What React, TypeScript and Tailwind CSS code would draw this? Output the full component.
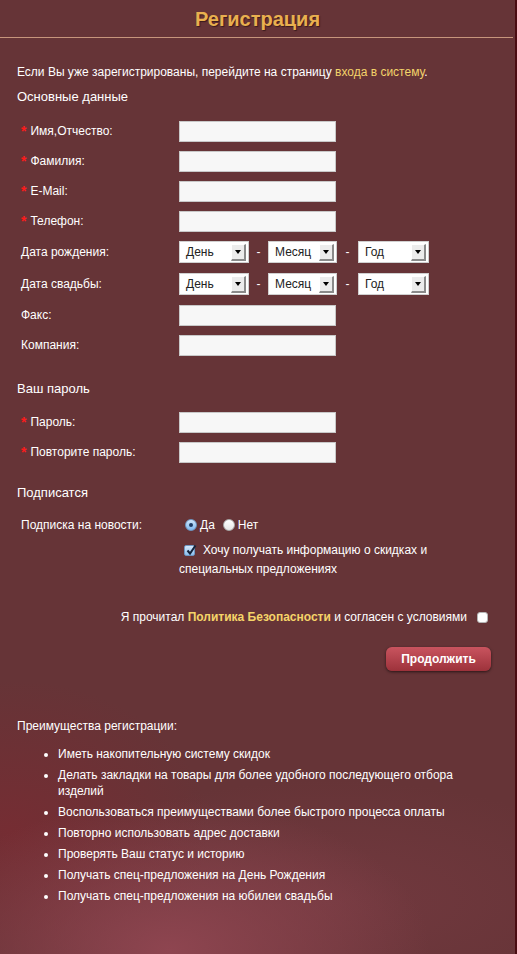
import React from 'react';

const font = { fontFamily: '"Liberation Sans", Arial, sans-serif' };

function Req() {
  return <span className="text-[#ff1a1a] text-[14px] font-bold mr-[4px] leading-none">*</span>;
}

function Field({ label, req }: { label: string; req?: boolean }) {
  return (
    <div className="flex items-center h-[30px]">
      <div className="w-[179px] pl-[21px] flex items-center text-[12px] text-white">
        {req && <Req />}
        <span>{label}</span>
      </div>
      <div className="w-[157px] h-[21px] bg-[#f7f7f7] border border-[#c8c8c8]" />
    </div>
  );
}

function Select({ text, w }: { text: string; w: string }) {
  return (
    <div className={`${w} h-[22px] bg-white border border-[#d0d0d0] flex items-center justify-between pl-[6px] pr-[2px]`}>
      <span className="text-[12px] text-[#222]">{text}</span>
      <div className="w-[15px] h-[17px] bg-[#ececec] border-r-2 border-b-2 border-[#8a8a8a] border-l border-t border-l-white border-t-white flex items-center justify-center">
        <div className="w-0 h-0 border-l-[3px] border-r-[3px] border-t-[4px] border-l-transparent border-r-transparent border-t-black" />
      </div>
    </div>
  );
}

function DateRow({ label }: { label: string }) {
  return (
    <div className="flex items-center h-[32px]">
      <div className="w-[179px] pl-[21px] text-[12px] text-white">{label}</div>
      <Select text="День" w="w-[70px]" />
      <span className="w-[19px] text-center text-white text-[12px]">-</span>
      <Select text="Месяц" w="w-[69px]" />
      <span className="w-[21px] text-center text-white text-[12px]">-</span>
      <Select text="Год" w="w-[71px]" />
    </div>
  );
}

const benefits = [
  'Иметь накопительную систему скидок',
  'Делать закладки на товары для более удобного последующего отбора изделий',
  'Воспользоваться преимуществами более быстрого процесса оплаты',
  'Повторно использовать адрес доставки',
  'Проверять Ваш статус и историю',
  'Получать спец-предложения на День Рождения',
  'Получать спец-предложения на юбилеи свадьбы',
];

export default function App() {
  return (
    <div
      style={font}
      className="w-[517px] min-h-[954px] border-r-2 border-[#4a0c12] bg-[#663437] bg-[radial-gradient(ellipse_260px_150px_at_170px_950px,#8e4550_0%,transparent_100%),radial-gradient(ellipse_200px_150px_at_10px_830px,#752d33_0%,transparent_100%),radial-gradient(ellipse_300px_120px_at_330px_900px,#72393f_0%,transparent_100%)]"
    >
      {/* Заголовок */}
      <div className="h-[37px] flex items-center justify-center">
        <h1 className="text-[20px] font-bold text-[#e9b04f] [text-shadow:1px_1px_1px_#3a1a1c]">Регистрация</h1>
      </div>
      <div className="h-px bg-[#c7957c] mr-[2px]" />

      <div className="pl-[17px] mt-[26px] text-[12px] leading-[16px] text-white">
        Если Вы уже зарегистрированы, перейдите на страницу{' '}
        <a href="#" className="text-[#f2d36a]">входа в систему</a>.
      </div>

      <div className="pl-[17px] mt-[9px] text-[13px] leading-[16px] text-white">Основные данные</div>

      <div className="mt-[11px]">
        <Field label="Имя,Отчество:" req />
        <Field label="Фамилия:" req />
        <Field label="E-Mail:" req />
        <Field label="Телефон:" req />
        <DateRow label="Дата рождения:" />
        <DateRow label="Дата свадьбы:" />
        <Field label="Факс:" />
        <Field label="Компания:" />
      </div>

      <div className="pl-[17px] mt-[21px] text-[13px] leading-[16px] text-white">Ваш пароль</div>
      <div className="mt-[10px]">
        <Field label="Пароль:" req />
        <Field label="Повторите пароль:" req />
      </div>

      <div className="pl-[17px] mt-[18px] text-[13px] leading-[16px] text-white">Подписатся</div>

      <div className="mt-[14px] h-[20px] flex items-center text-[12px] text-white">
        <div className="w-[185px] pl-[21px]">Подписка на новости:</div>
        <span className="w-[12px] h-[12px] rounded-full bg-[linear-gradient(#cfe6fb,#7fb8ef)] border border-[#6f97c2] flex items-center justify-center">
          <span className="w-[4px] h-[4px] rounded-full bg-[#1d3a63]" />
        </span>
        <span className="ml-[3px] mr-[8px]">Да</span>
        <span className="w-[12px] h-[12px] rounded-full bg-[linear-gradient(#ffffff,#e6e6e6)] border border-[#a9a9a9]" />
        <span className="ml-[3px]">Нет</span>
      </div>

      <div className="mt-[6px] pl-[179px] pr-[60px] text-[12px] leading-[19px] text-white">
        <span className="inline-flex items-center align-middle w-[11px] h-[11px] ml-[5px] mr-[8px] bg-[linear-gradient(#d6e9fb,#8cc0f0)] border border-[#6f97c2] rounded-[2px] relative">
          <svg viewBox="0 0 12 12" className="absolute -top-[2px] left-0 w-[12px] h-[12px]">
            <path d="M2.5 6.5 L5 9.5 L10.5 1.5" fill="none" stroke="#13233b" strokeWidth="2" />
          </svg>
        </span>
        Хочу получать информацию о скидках и специальных предложениях
      </div>

      <div className="mt-[30px] h-[16px] flex items-center justify-end pr-[27px] text-[12px] text-white">
        <span>
          Я прочитал <b className="text-[#f5d469]">Политика Безопасности</b> и согласен с условиями
        </span>
        <span className="ml-[10px] w-[11px] h-[11px] rounded-[3px] bg-white border border-[#b5b5b5]" />
      </div>

      <div className="mt-[22px] flex justify-end pr-[24px]">
        <button className="w-[105px] h-[24px] rounded-[6px] bg-[linear-gradient(#c9545f,#9d323b)] text-white text-[12px] font-bold shadow-[0_1px_3px_rgba(0,0,0,0.6)]">
          Продолжить
        </button>
      </div>

      <div className="pl-[17px] mt-[47px] text-[12px] leading-[16px] text-white">Преимущества регистрации:</div>
      <ul className="mt-[12px] pl-[58px] pr-[60px] flex flex-col gap-[5px] text-[12px] leading-[16px] text-white list-disc">
        {benefits.map((b) => (
          <li key={b}>{b}</li>
        ))}
      </ul>
    </div>
  );
}
